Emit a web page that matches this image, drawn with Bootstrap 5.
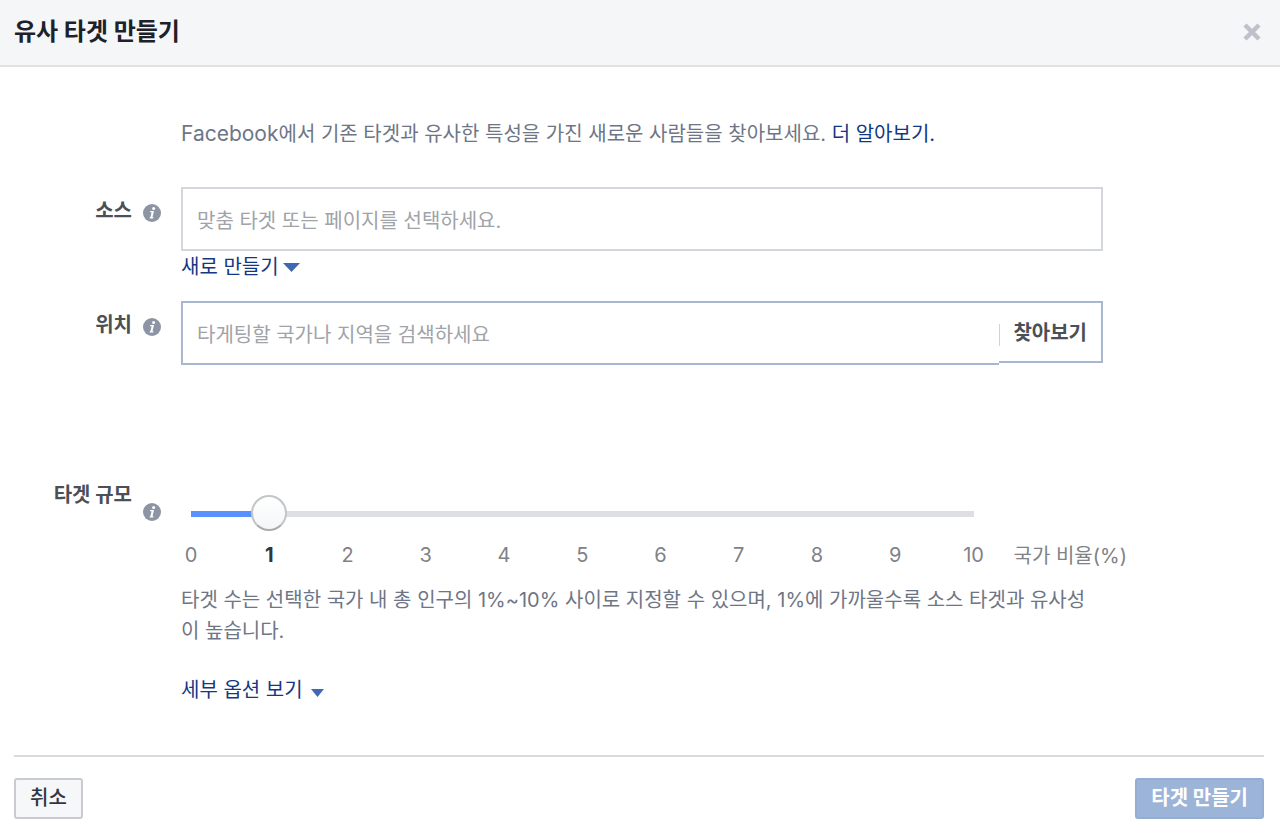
<!DOCTYPE html>
<html lang="ko">
<head>
<meta charset="utf-8">
<meta name="viewport" content="width=device-width, initial-scale=1">
<title>유사 타겟 만들기</title>
<link rel="stylesheet" href="https://cdn.jsdelivr.net/npm/bootstrap@5.3.0/dist/css/bootstrap.min.css">
<style>
  body { font: 20px/31px Inter, "Noto Sans CJK KR", sans-serif; color: #6e7686; background: #fff; }
  a, .link-btn { color: #133783; text-decoration: none; }
  .dialog-head { background: #f5f6f8; border-bottom: 2px solid #e1e2e4; padding: 16px 18px 18px 14px; }
  .dialog-head h1 { font-size: 24px; line-height: 31px; color: #1d2129; }
  .close-x { color: #bec1c9; line-height: 0; }
  .dialog-main { padding: 52px 177px 49px 0; }
  .form-line { display: grid; grid-template-columns: 181px minmax(0, 1fr); }
  .intro { grid-column: 2; }
  .brand-word { font-size: 21px; line-height: 1; }
  .source-line { margin-top: 37px; }
  .place-line { margin-top: 18px; }
  .size-line { margin-top: 115px; }
  .label-cell { display: flex; justify-content: flex-end; gap: 11px; padding: 9px 20px 0 0; }
  .label-cell label { font-weight: 700; color: #4b4f56; }
  .label-cell svg { margin-top: 8px; }
  .size-label { padding-top: 0; }
  .size-label svg { margin-top: 23px; }
  .field { height: 64px; border: 2px solid #d3d6da; border-radius: 0; padding: 3px 14px 0; font-size: 20px; color: #1d2129; }
  .field::placeholder { color: #a0a3a8; }
  .place-field { border-color: #a9b6d0; border-right: 0; }
  .browse { height: 62px; border: 2px solid #a9b6d0; border-left: 0; border-radius: 0; padding: 1px 14px 0 0; font-size: 20px; font-weight: 700; color: #4b4f56; display: flex; align-items: center; gap: 13px; }
  .browse::before { content: ""; width: 1px; height: 22px; background: #d0d2d6; margin-top: 5px; }
  .link-btn { font-size: 20px; line-height: 31px; }
  .source-line .link-btn { padding-top: 1px !important; }
  .slider-wrap { gap: 22px; margin: 16px -24px 0 -8px; }
  .size-range { display: block; width: 100%; height: 36px; margin: 0; appearance: none; -webkit-appearance: none; background: transparent; }
  .size-range::-webkit-slider-runnable-track {
    height: 6px;
    background: linear-gradient(to right, transparent 18px, #5890ff 18px, #5890ff calc(18px + (100% - 36px) * 0.1), #dddfe5 calc(18px + (100% - 36px) * 0.1), #dddfe5 calc(100% - 18px), transparent calc(100% - 18px));
  }
  .size-range::-webkit-slider-thumb {
    -webkit-appearance: none; width: 36px; height: 36px; margin-top: -16px; border-radius: 50%;
    border: 2px solid #c3c5c9; border-bottom-color: #a9abb0;
    background: linear-gradient(#fff, #f5f6f7);
  }
  .ticks { margin: 8px 18px 0; color: #7f8287; }
  .ticks span { width: 0; display: flex; justify-content: center; }
  .ticks .chosen { font-weight: 700; color: #333639; }
  .unit { color: #7f8287; padding-top: 45px; }
  .size-help { margin: 13px 0 28px; }
  .dialog-foot { margin: 0 16px 0 14px; padding: 21px 0 16px; border-top: 2px solid #d8dade; }
  .dialog-foot .btn { height: 41px; padding: 0 14px; font-size: 20px; line-height: 31px; border-width: 2px; border-radius: 3px; }
  .btn-cancel { color: #333740; font-weight: 500; background: #f6f7f9; border-color: #c9cbd0; }
  .btn-create, .btn-create:disabled { color: #fff; font-weight: 700; background: #9cb4d8; border-color: #94add3; opacity: 1; }
</style>
</head>
<body>
<svg class="d-none" aria-hidden="true">
  <symbol id="info" viewBox="0 0 18 18">
    <circle cx="9" cy="9" r="9" fill="#8d94a3"/>
    <circle cx="10.600" cy="4.500" r="1.500" fill="#fff"/>
    <path d="M7.200 7.100h3.800l-1.500 6.200h1l-.3 1.100H6.600l.3-1.100h.5l1.200-5.100H7z" fill="#fff"/>
  </symbol>
</svg>

<header class="dialog-head d-flex justify-content-between align-items-center">
  <h1 class="fw-bold m-0">유사 타겟 만들기</h1>
  <button type="button" class="close-x btn p-0 border-0" aria-label="닫기">
    <svg width="20" height="20" viewBox="0 0 20 20"><path d="M3 3l14 14M17 3L3 17" stroke="currentColor" stroke-width="4.500"/></svg>
  </button>
</header>

<main class="dialog-main">
  <div class="form-line">
    <p class="intro mb-0"><span class="brand-word">Facebook</span>에서 기존 타겟과 유사한 특성을 가진 새로운 사람들을 찾아보세요. <a href="#">더 알아보기.</a></p>
  </div>

  <div class="form-line source-line">
    <div class="label-cell"><label for="source">소스</label><svg width="18" height="18"><use href="#info"/></svg></div>
    <div>
      <input id="source" type="text" class="field form-control" placeholder="맞춤 타겟 또는 페이지를 선택하세요.">
      <button type="button" class="link-btn btn p-0 border-0 d-flex align-items-center gap-1">새로 만들기
        <svg width="17" height="9" viewBox="0 0 17 9"><path d="M0 0h17L8.500 9z" fill="#4267b2"/></svg>
      </button>
    </div>
  </div>

  <div class="form-line place-line">
    <div class="label-cell"><label for="place">위치</label><svg width="18" height="18"><use href="#info"/></svg></div>
    <div class="d-flex align-items-start">
      <input id="place" type="text" class="field place-field form-control" placeholder="타게팅할 국가나 지역을 검색하세요">
      <button type="button" class="browse btn flex-shrink-0">찾아보기</button>
    </div>
  </div>

  <div class="form-line size-line">
    <div class="label-cell size-label"><label for="size">타겟 규모</label><svg width="18" height="18"><use href="#info"/></svg></div>
    <div>
      <div class="slider-wrap d-flex">
        <div class="flex-grow-1">
          <input id="size" class="size-range" type="range" min="0" max="10" value="1">
          <div class="ticks d-flex justify-content-between">
            <span>0</span><span class="chosen">1</span><span>2</span><span>3</span><span>4</span><span>5</span><span>6</span><span>7</span><span>8</span><span>9</span><span>10</span>
          </div>
        </div>
        <div class="unit text-nowrap">국가 비율(%)</div>
      </div>
      <p class="size-help">타겟 수는 선택한 국가 내 총 인구의 1%~10% 사이로 지정할 수 있으며, 1%에 가까울수록 소스 타겟과 유사성이 높습니다.</p>
      <button type="button" class="link-btn btn p-0 border-0 d-flex align-items-center gap-2">세부 옵션 보기
        <svg class="mt-1" width="13" height="8" viewBox="0 0 13 8"><path d="M0 0h13L6.500 8z" fill="#3f68b5"/></svg>
      </button>
    </div>
  </div>
</main>

<footer class="dialog-foot d-flex justify-content-between">
  <button type="button" class="btn btn-cancel">취소</button>
  <button type="button" class="btn btn-create" disabled>타겟 만들기</button>
</footer>
<script src="https://cdn.jsdelivr.net/npm/bootstrap@5.3.0/dist/js/bootstrap.bundle.min.js"></script>
</body>
</html>
